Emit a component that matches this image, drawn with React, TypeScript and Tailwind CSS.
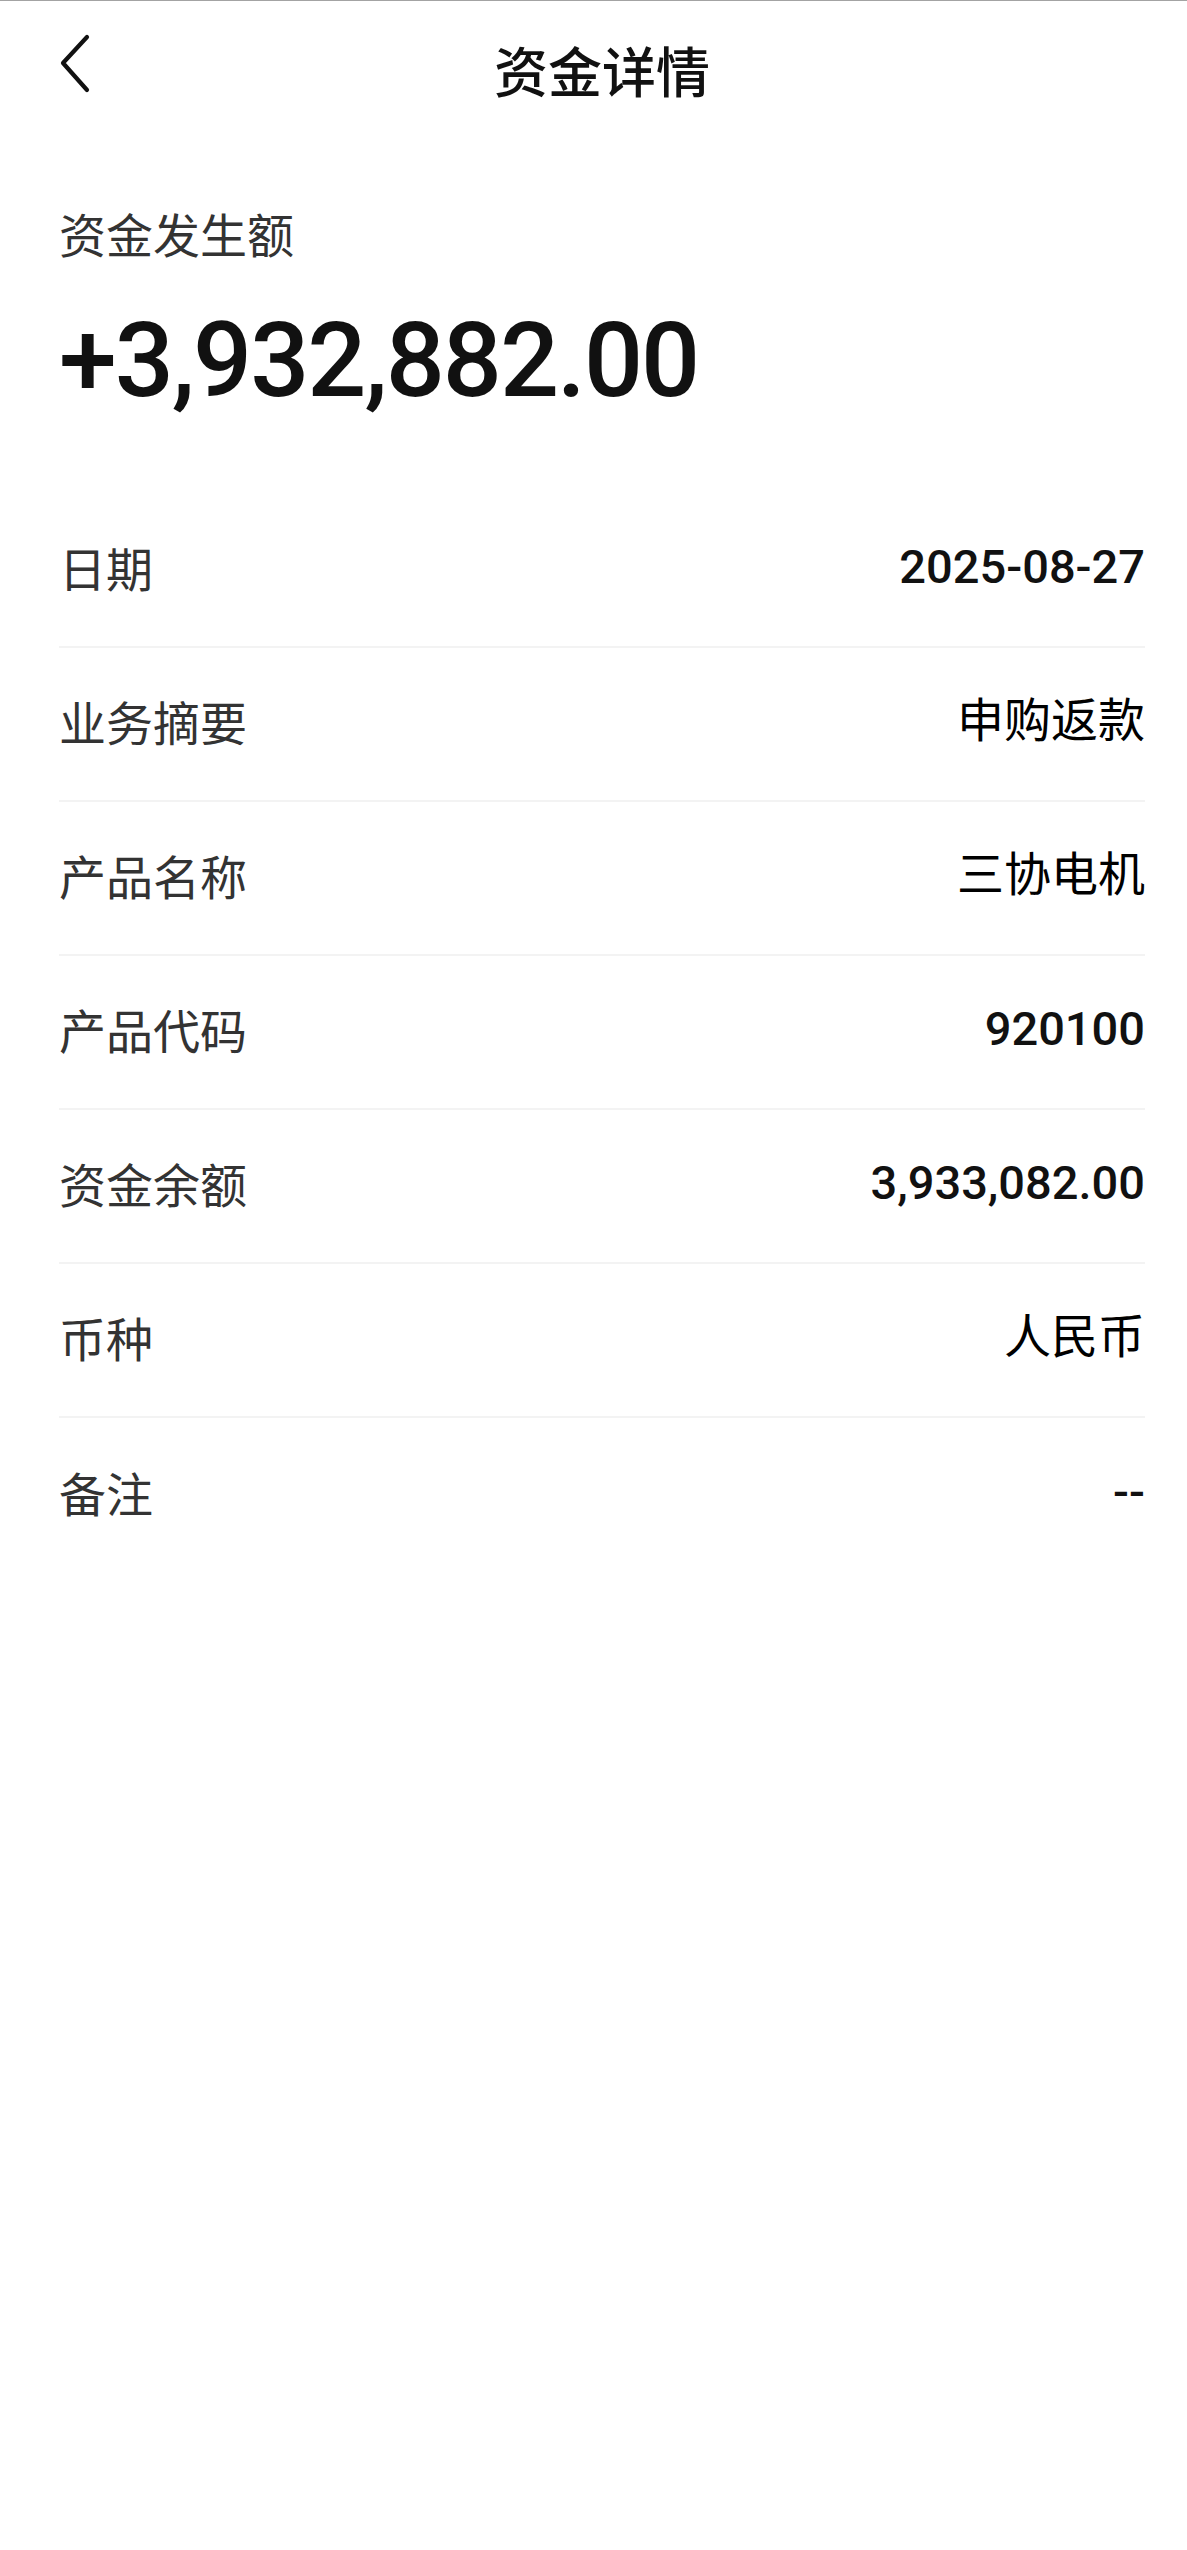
import React from "react";

const rows: { label: string; value: string; numeric?: boolean }[] = [
  { label: "日期", value: "2025-08-27", numeric: true },
  { label: "业务摘要", value: "申购返款" },
  { label: "产品名称", value: "三协电机" },
  { label: "产品代码", value: "920100", numeric: true },
  { label: "资金余额", value: "3,933,082.00", numeric: true },
  { label: "币种", value: "人民币" },
  { label: "备注", value: "--", numeric: true },
];

const cjk = "font-['Noto_Sans_CJK_SC',sans-serif]";
const num = "font-['Roboto','Noto_Sans_CJK_SC',sans-serif]";

export default function App() {
  return (
    <div className="min-h-[2550px] w-full bg-white border-t border-[#a3a3a3]">
      <div className="pl-[59px] pr-[42px]">
        <header className="grid h-[138px] grid-cols-[1fr_auto_1fr]">
          <div className="flex items-start pt-[33px]">
            <svg width="32" height="60" viewBox="0 0 32 60" className="ml-[1px]">
              <polyline
                points="27,3 3,29 27,56"
                fill="none"
                stroke="#111111"
                strokeWidth="4.2"
                strokeLinecap="round"
                strokeLinejoin="round"
              />
            </svg>
          </div>
          <h1 className={`${cjk} self-center text-[54px] font-medium leading-[1.4] text-[#111111]`}>
            资金详情
          </h1>
          <div />
        </header>

        <section className="pt-[61px]">
          <div className={`${cjk} text-[47px] leading-[66px] text-[#333333]`}>资金发生额</div>
          <div className={`${num} mt-[43px] text-[104px] font-medium leading-none tracking-[-2px] text-[#111111]`}>
            +3,932,882.00
          </div>
        </section>

        <div className="mt-[81px]">
          {rows.map((r, i) => (
            <div
              key={r.label}
              className={`flex h-[154px] items-center justify-between pb-[8px] ${
                i < rows.length - 1 ? "border-b-2 border-[#f3f3f3]" : ""
              }`}
            >
              <span className={`${cjk} text-[47px] leading-none text-[#333333]`}>{r.label}</span>
              <span
                className={`${num} text-[47px] leading-none text-[#111111] ${
                  r.numeric ? "font-medium" : "font-normal text-black"
                }`}
              >
                {r.value}
              </span>
            </div>
          ))}
        </div>
      </div>
    </div>
  );
}
